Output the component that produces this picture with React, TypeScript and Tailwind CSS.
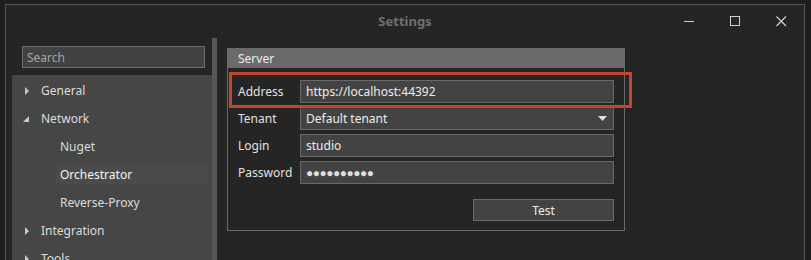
import React from "react";

const font = { fontFamily: '"Noto Sans", "Open Sans", sans-serif' };

function Expander({ open }: { open: boolean }) {
  return open ? (
    <svg width="7" height="7" viewBox="0 0 7 7" className="mr-[11px] ml-[11px]">
      <polygon points="6,0 6,6 0,6" fill="#c8c8c8" />
    </svg>
  ) : (
    <svg width="7" height="8" viewBox="0 0 7 8" className="mr-[11px] ml-[11px]">
      <polygon points="2,0 6,4 2,8" fill="#c8c8c8" />
    </svg>
  );
}

function TreeItem({ label, open, child, selected }: { label: string; open?: boolean; child?: boolean; selected?: boolean }) {
  if (child) {
    return (
      <div className={`ml-[44px] mr-[4px] flex h-5 items-center pl-[4px] ${selected ? "bg-[#4b4b4b] text-[#f4f4f4]" : "text-[#dcdcdc]"}`}>
        {label}
      </div>
    );
  }
  return (
    <div className="flex h-5 items-center text-[#dcdcdc]">
      <Expander open={!!open} />
      <span>{label}</span>
    </div>
  );
}

function Field({ label, value, select, dots }: { label: string; value: string; select?: boolean; dots?: boolean }) {
  return (
    <div className="flex h-[23px] items-center">
      <div className="w-[62px] pt-[1px] text-[#e2e2e2]">{label}</div>
      <div className="flex h-full flex-1 items-center border border-[#6a6a6a] bg-[#434343] px-[5px] text-[#ececec]">
        <span className={`flex-1 ${dots ? "tracking-[-0.5px] text-[12px] text-[#dedede]" : ""}`}>{value}</span>
        {select && (
          <svg width="9" height="5" viewBox="0 0 9 5" className="mr-[1px]">
            <polygon points="0,0 9,0 4.5,5" fill="#e0e0e0" />
          </svg>
        )}
      </div>
    </div>
  );
}

export default function App() {
  return (
    <div className="h-[260px] w-[811px] overflow-hidden bg-[#1e1e1e] pl-[5px] pt-[4px] text-[12px]" style={font}>
      <div className="h-[300px] w-[800px] border-l border-r border-t border-[#555555] bg-[#252525]">
        <div className="relative flex h-[33px] items-center justify-center">
          <span className="pt-[1px] text-[13px] font-bold text-[#707070]">Settings</span>
          <div className="absolute right-0 top-0 flex h-full items-center">
            <svg width="11" height="11" viewBox="0 0 11 11" className="mr-[35px]">
              <line x1="0" y1="5.5" x2="10" y2="5.5" stroke="#d0d0d0" strokeWidth="1" />
            </svg>
            <svg width="11" height="11" viewBox="0 0 11 11" className="mr-[35px]">
              <rect x="0.5" y="0.5" width="9" height="9" fill="none" stroke="#d0d0d0" strokeWidth="1" />
            </svg>
            <svg width="11" height="11" viewBox="0 0 11 11" className="mr-[17px]">
              <path d="M0.5 0.5 L10 10 M10 0.5 L0.5 10" stroke="#d0d0d0" strokeWidth="1.2" />
            </svg>
          </div>
        </div>

        <div className="flex">
          <div className="ml-[6px] w-[200px]">
            <div className="pb-[7px] pl-[10px] pr-[7px] pt-[8px]">
              <div className="flex h-[22px] items-center border border-[#6e6e6e] bg-[#424242] pl-[4px] pt-[1px] text-[#a4a4a4]">Search</div>
            </div>
            <div className="flex h-[200px] flex-col gap-2 bg-[#464646] pt-[6px]">
              <TreeItem label="General" />
              <TreeItem label="Network" open />
              <TreeItem label="Nuget" child />
              <TreeItem label="Orchestrator" child selected />
              <TreeItem label="Reverse-Proxy" child />
              <TreeItem label="Integration" />
              <TreeItem label="Tools" />
            </div>
          </div>
          <div className="h-[230px] w-[5px] bg-[#575757]" />

          <div className="relative ml-[10px] mt-[10px] w-[398px]">
            <div className="flex h-[20px] items-center bg-[#6a6a6a] pl-[11px] pt-[1px] text-[#ececec]">Server</div>
            <div className="flex flex-col border border-t-0 border-[#6a6a6a] px-[10px] pb-[9px] pt-[12px]">
              <div className="flex flex-col gap-1">
                <Field label="Address" value="https://localhost:44392" />
                <Field label="Tenant" value="Default tenant" select />
                <Field label="Login" value="studio" />
                <Field label="Password" value="●●●●●●●●●●" dots />
              </div>
              <div className="mt-[15px] flex justify-end">
                <div className="flex h-[22px] w-[141px] items-center justify-center border border-[#6a6a6a] bg-[#434343] pt-[1px] text-[#ececec]">
                  Test
                </div>
              </div>
            </div>
            <div className="absolute left-[2px] top-[24px] h-[36px] w-[403px] border-[3px] border-[#c2452d]" />
          </div>
        </div>
      </div>
    </div>
  );
}
